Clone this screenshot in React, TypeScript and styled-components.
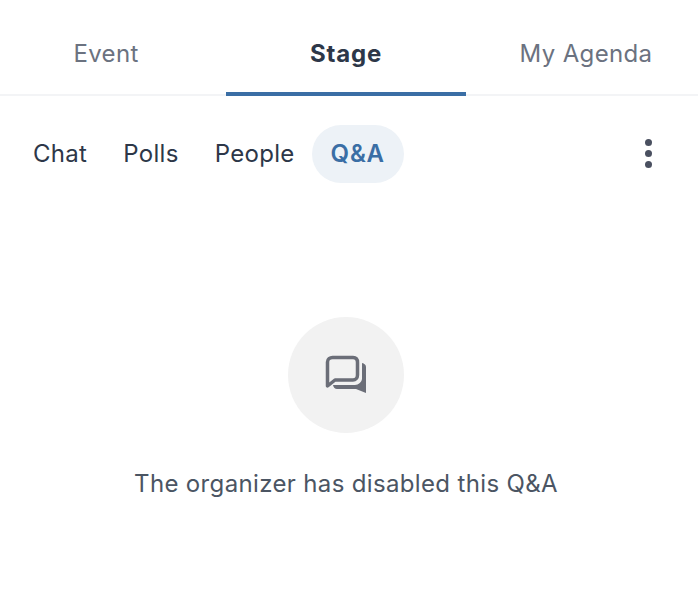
import React from "react";
import styled, { createGlobalStyle } from "styled-components";

const GlobalStyle = createGlobalStyle`
  html, body {
    margin: 0;
    background: #fff;
    font-family: Inter, "Liberation Sans", sans-serif;
    overflow: hidden;
  }
`;

const Page = styled.div`
  width: 698px;
  height: 600px;
  overflow: hidden;
`;

const TabBar = styled.div`
  display: flex;
  height: 96px;
  box-shadow: inset 0 -2px 0 #f3f4f6;
  overflow: hidden;
`;

const TabRow = styled.div`
  display: flex;
  margin-left: -14px;
  flex: none;
`;

const Tab = styled.div<{ $active?: boolean }>`
  flex: none;
  width: 240px;
  height: 96px;
  box-sizing: border-box;
  padding-top: 39px;
  text-align: center;
  font-size: 24px;
  line-height: 30px;
  font-weight: ${(p) => (p.$active ? 700 : 400)};
  letter-spacing: ${(p) => (p.$active ? "0.8px" : "0.35px")};
  color: ${(p) => (p.$active ? "#2d3748" : "#6b7280")};
  border-bottom: ${(p) => (p.$active ? "4px solid #3a6ea5" : "none")};
`;

const SubBar = styled.div`
  display: flex;
  align-items: center;
  justify-content: space-between;
  height: 58px;
  margin-top: 29px;
  padding: 0 46px 0 15px;
`;

const Pills = styled.div`
  display: flex;
`;

const Pill = styled.div<{ $active?: boolean }>`
  height: 58px;
  box-sizing: border-box;
  margin-left: ${(p) => (p.$active ? "-1px" : "0")};
  padding: 0 ${(p) => (p.$active ? "19px" : "18px")} 2px;
  display: flex;
  align-items: center;
  font-size: 24px;
  letter-spacing: ${(p) => (p.$active ? "0.8px" : "0.3px")};
  border-radius: 29px;
  font-weight: ${(p) => (p.$active ? 600 : 400)};
  color: ${(p) => (p.$active ? "#3a6ea5" : "#2d3748")};
  background: ${(p) => (p.$active ? "#edf2f7" : "transparent")};
`;

const MoreDots = styled.div`
  display: flex;
  flex-direction: column;
  gap: 4px;
  margin-top: -2px;
`;

const Dot = styled.span`
  width: 7px;
  height: 7px;
  border-radius: 50%;
  background: #4a5060;
`;

const Empty = styled.div`
  display: flex;
  flex-direction: column;
  align-items: center;
  width: 692px;
  margin-top: 134px;
`;

const IconCircle = styled.div`
  width: 116px;
  height: 116px;
  border-radius: 50%;
  background: #f2f2f2;
  display: flex;
  align-items: center;
  justify-content: center;
`;

const Message = styled.div`
  margin-top: 35px;
  font-size: 24px;
  line-height: 32px;
  letter-spacing: 0.35px;
  color: #4b5563;
`;

const QaIcon = () => (
  <svg width="44" height="44" viewBox="0 0 44 44" fill="none">
    <path
      d="M3.5 29V9C3.5 6 6 4.5 8.5 4.5H29C32 4.5 33.5 6.5 33.5 9.5V22C33.5 25 31.5 27 29 27H11L3.5 33Z"
      stroke="#6b6e78"
      strokeWidth="3.5"
      strokeLinejoin="round"
    />
    <path
      d="M9 32H31C34.5 32 38 29 38 25.5V10C40.5 10.5 42 12 42 14V40L32 36H13C11 36 9.5 34.5 9 32Z"
      fill="#6b6e78"
    />
  </svg>
);

export default function App() {
  return (
    <Page>
      <GlobalStyle />
      <TabBar>
        <TabRow>
          <Tab>Event</Tab>
          <Tab $active>Stage</Tab>
          <Tab>My Agenda</Tab>
        </TabRow>
      </TabBar>
      <SubBar>
        <Pills>
          <Pill>Chat</Pill>
          <Pill>Polls</Pill>
          <Pill>People</Pill>
          <Pill $active>Q&amp;A</Pill>
        </Pills>
        <MoreDots>
          <Dot />
          <Dot />
          <Dot />
        </MoreDots>
      </SubBar>
      <Empty>
        <IconCircle>
          <QaIcon />
        </IconCircle>
        <Message>The organizer has disabled this Q&amp;A</Message>
      </Empty>
    </Page>
  );
}
